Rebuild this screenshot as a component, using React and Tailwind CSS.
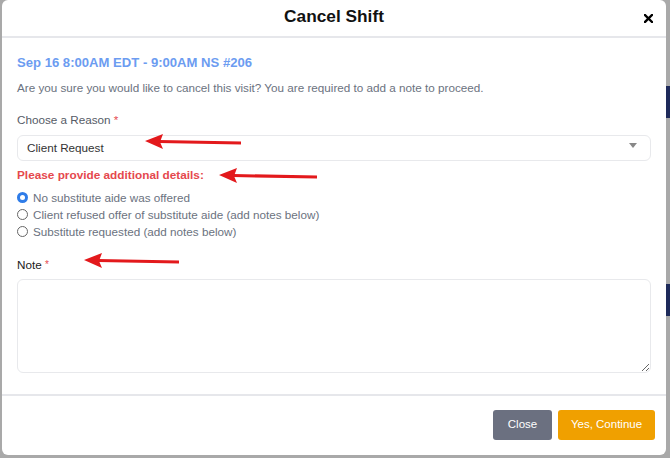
import React from 'react';

const options = [
    { label: 'No substitute aide was offered', checked: true },
    { label: 'Client refused offer of substitute aide (add notes below)', checked: false },
    { label: 'Substitute requested (add notes below)', checked: false },
];

const Arrow = ({ x1, y1, x2, y2 }) => {
    // shaft from (x1,y1) to tip (x2,y2), head points left
    return (
        <g>
            <line x1={x1} y1={y1} x2={x2 + 14} y2={y2 + 0.5} stroke="#e3191c" strokeWidth="3" />
            <polygon points={`${x2},${y2} ${x2 + 18},${y2 - 7} ${x2 + 15},${y2 + 1} ${x2 + 18},${y2 + 8}`} fill="#e3191c" />
        </g>
    );
};

const App = () => {
    return (
        <div
            className="w-[670px] h-[458px] bg-[#a9a9a9] relative overflow-hidden"
            style={{ fontFamily: '"Liberation Sans", Arial, sans-serif' }}
        >
            <div className="absolute right-0 top-[86px] w-[4px] h-[32px] bg-[#1e2a5a]" />
            <div className="absolute right-0 top-[284px] w-[4px] h-[32px] bg-[#1e2a5a]" />
            <div className="ml-[2px] w-[664px] h-[455px] bg-white rounded-md flex flex-col">
                {/* header */}
                <div className="h-[38px] border-b-2 border-[#e6e7eb] flex items-center justify-center relative">
                    <h2 className="text-[17.3px] font-bold text-[#111] leading-none mt-[-2px]">Cancel Shift</h2>
                    <svg className="absolute right-[13px] top-[14px]" width="9" height="9" viewBox="0 0 9 9">
                        <path d="M1 1 L8 8 M8 1 L1 8" stroke="#000" strokeWidth="2.4" strokeLinecap="square" />
                    </svg>
                </div>

                {/* body */}
                <div className="px-[15px] flex-1">
                    <div className="mt-[16px] text-[13.1px] font-bold text-[#6c9cf1] leading-[18px]">
                        Sep 16 8:00AM EDT - 9:00AM NS #206
                    </div>
                    <p className="mt-[8px] text-[11.7px] text-[#6b7280] leading-[16px]">
                        Are you sure you would like to cancel this visit? You are required to add a note to proceed.
                    </p>

                    <div className="mt-[16px] text-[11.7px] text-[#555b66] leading-[16px]">
                        Choose a Reason <span className="text-[#e5484d]">*</span>
                    </div>
                    <div className="mt-[7px] h-[26px] border border-[#e8e9ec] rounded-md flex items-center justify-between pl-[9px] pr-[13px]">
                        <span className="text-[11.7px] text-[#333] leading-none">Client Request</span>
                        <span className="w-0 h-0 border-l-[4px] border-r-[4px] border-t-[5px] border-l-transparent border-r-transparent border-t-[#888] mt-[-5px]" />
                    </div>

                    <div className="mt-[6px] text-[11.8px] font-bold text-[#e5484d] leading-[16px]">
                        Please provide additional details:
                    </div>

                    <div className="mt-[6px] flex flex-col">
                        {options.map((o, idx) => (
                            <label key={idx} className="h-[17px] flex items-center gap-[5px]">
                                {o.checked ? (
                                    <span className="w-[11px] h-[11px] rounded-full bg-[#2f7ce8] flex items-center justify-center">
                                        <span className="w-[5px] h-[5px] rounded-full bg-white" />
                                    </span>
                                ) : (
                                    <span className="w-[11px] h-[11px] rounded-full border border-[#666] bg-white" />
                                )}
                                <span className="text-[11.7px] text-[#6b7280] leading-none">{o.label}</span>
                            </label>
                        ))}
                    </div>

                    <div className="mt-[17px] text-[11.7px] text-[#222] leading-[16px]">
                        Note <span className="text-[#e5484d] text-[10px] align-top">*</span>
                    </div>
                    <textarea className="mt-[6px] block w-full h-[94px] border border-[#e8e9ec] rounded-md resize-y outline-none" />
                </div>

                {/* footer */}
                <div className="h-[61px] border-t-2 border-[#e6e7eb] flex items-start justify-end gap-[6px] pt-[14px] pr-[11px]">
                    <button className="w-[59px] h-[30px] bg-[#6b7080] text-white text-[11.5px] rounded-[3px]">Close</button>
                    <button className="w-[97px] h-[30px] bg-[#f0a000] text-white text-[11.5px] rounded-[3px]">Yes, Continue</button>
                </div>
            </div>

            <svg className="absolute left-0 top-0 pointer-events-none" width="670" height="458">
                <Arrow x1={241} y1={143} x2={145} y2={141} />
                <Arrow x1={317} y1={177} x2={219} y2={175} />
                <Arrow x1={179} y1={262} x2={84} y2={260} />
            </svg>
        </div>
    );
};

export default App;
